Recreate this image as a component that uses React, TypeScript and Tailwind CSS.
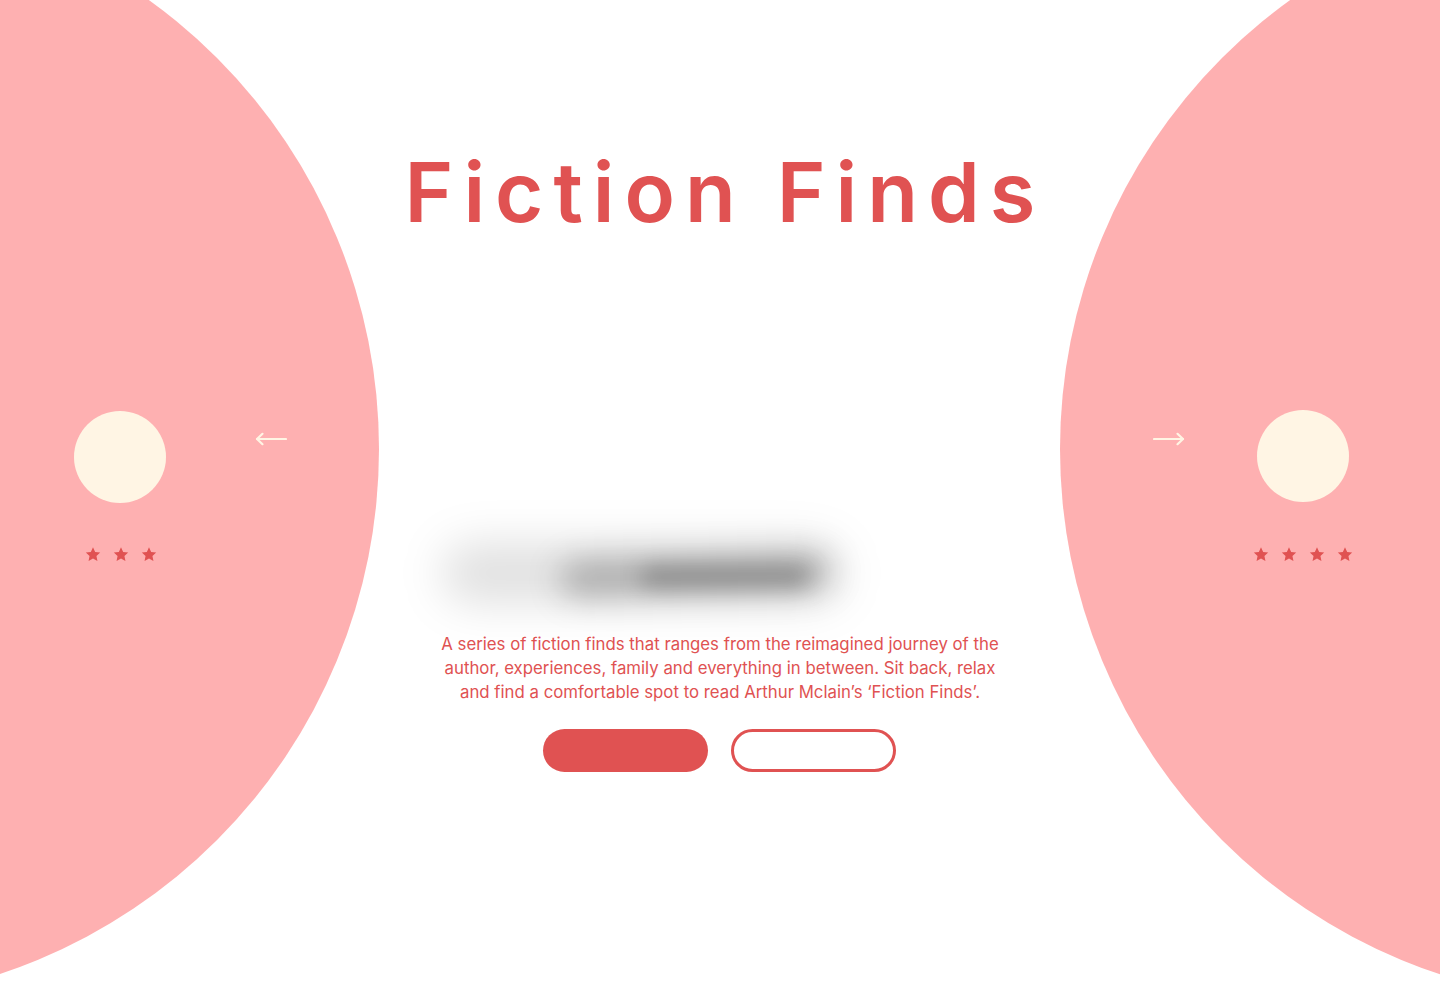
const RED = "#E05252";

function Star() {
  return (
    <svg width="16" height="15" viewBox="0 0 24 23" fill={RED}>
      <path d="M12 0.5l3.3 7.1 7.7.9-5.7 5.3 1.5 7.7L12 17.6l-6.8 3.9 1.5-7.7L1 8.5l7.7-.9z" />
    </svg>
  );
}

function Arrow({ dir }: { dir: "left" | "right" }) {
  return (
    <svg width="32" height="14" viewBox="0 0 32 14" fill="none" stroke="#FFF5E4" strokeWidth="2.2" strokeLinecap="round" strokeLinejoin="round">
      {dir === "left" ? (
        <>
          <path d="M2 7h29" />
          <path d="M7.5 1.8L2 7l5.5 5.2" />
        </>
      ) : (
        <>
          <path d="M1 7h29" />
          <path d="M24.5 1.8L30 7l-5.5 5.2" />
        </>
      )}
    </svg>
  );
}

function Stars({ count }: { count: number }) {
  return (
    <div className="flex items-center justify-center gap-[12px]">
      {Array.from({ length: count }).map((_, i) => (
        <Star key={i} />
      ))}
    </div>
  );
}

export default function App() {
  return (
    <div className="relative h-[1000px] w-full overflow-hidden bg-white" style={{ fontFamily: "Inter, 'Noto Sans', sans-serif" }}>
      {/* background discs */}
      <div className="absolute left-[-727px] top-[-104px] h-[1106px] w-[1106px] rounded-full bg-[#FEB0B1]" />
      <div className="absolute right-[-726px] top-[-104px] h-[1106px] w-[1106px] rounded-full bg-[#FEB0B1]" />

      <div className="relative grid h-full grid-cols-[380px_1fr_380px]">
        {/* left */}
        <div className="flex items-start gap-[89px] pl-[74px] pt-[411px]">
          <div className="flex w-[92px] flex-col items-center">
            <div className="h-[92px] w-[92px] rounded-full bg-[#FFF5E4]" />
            <div className="mt-[44px] pl-[2px]">
              <Stars count={3} />
            </div>
          </div>
          <div className="mt-[21px]">
            <Arrow dir="left" />
          </div>
        </div>

        {/* center */}
        <div className="flex flex-col items-center pt-[147px]">
          <h1 className="pl-[10px] text-[83px] font-semibold leading-[1.1] tracking-[10px] text-[#E05252]">
            Fiction Finds
          </h1>
          <div className="relative mt-[289px] h-[90px] w-full">
            <div className="absolute left-[62px] top-[16px] h-[60px] w-[400px] rounded-full bg-black/12 blur-[22px]" />
            <div className="absolute left-[180px] top-[30px] h-[36px] w-[270px] -rotate-[2deg] rounded-full bg-black/25 blur-[16px]" />
            <div className="absolute left-[260px] top-[40px] h-[20px] w-[170px] rounded-full bg-black/25 blur-[11px]" />
          </div>
          <p className="mt-[15px] text-center text-[16.8px] leading-[24px] text-[#E05252]">
            A series of fiction finds that ranges from the reimagined journey of the
            <br />
            author, experiences, family and everything in between. Sit back, relax
            <br />
            and find a comfortable spot to read Arthur Mclain’s ‘Fiction Finds’.
          </p>
          <div className="mt-[25px] flex gap-[23px] pr-[2px]">
            <button className="h-[43px] w-[165px] rounded-full bg-[#E05252]" />
            <button className="h-[43px] w-[165px] rounded-full border-[3px] border-[#E05252] bg-white" />
          </div>
        </div>

        {/* right */}
        <div className="flex items-start gap-[72px] pl-[93px] pt-[410px]">
          <div className="mt-[22px]">
            <Arrow dir="right" />
          </div>
          <div className="flex w-[92px] flex-col items-center">
            <div className="h-[92px] w-[92px] rounded-full bg-[#FFF5E4]" />
            <div className="mt-[45px]">
              <Stars count={4} />
            </div>
          </div>
        </div>
      </div>
    </div>
  );
}
